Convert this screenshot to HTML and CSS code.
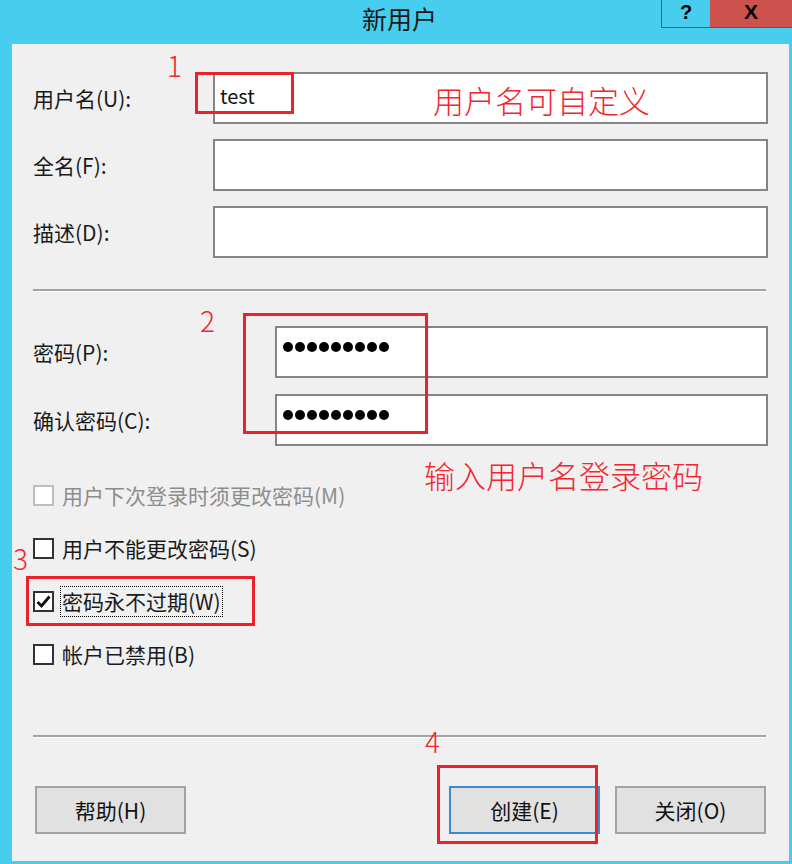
FILE: index.html
```html
<!DOCTYPE html>
<html lang="zh-CN">
<head>
  <meta charset="UTF-8" />
  <meta name="viewport" content="width=device-width, initial-scale=1.0"/>
  <title>新用户</title>
  <link rel="stylesheet" href="styles.css">
</head>
<body>

  <div class="window">
    <div class="titlebar">
      <div class="title">新用户</div>
      <div class="controls">
        <div class="ctrl ctrl-help">?</div>
        <div class="ctrl ctrl-close">X</div>
      </div>
    </div>

    <div class="client">
      <div class="rows">
        <div class="row">
          <label>用户名(U):</label>
          <div class="field"><span class="value">test</span></div>
        </div>
        <div class="row">
          <label>全名(F):</label>
          <div class="field"></div>
        </div>
        <div class="row">
          <label>描述(D):</label>
          <div class="field"></div>
        </div>
      </div>

      <div class="sep sep-top"></div>

      <div class="rows rows-pass">
        <div class="row">
          <label>密码(P):</label>
          <div class="field">
            <div class="dots"><i></i><i></i><i></i><i></i><i></i><i></i><i></i><i></i><i></i></div>
          </div>
        </div>
        <div class="row">
          <label>确认密码(C):</label>
          <div class="field">
            <div class="dots"><i></i><i></i><i></i><i></i><i></i><i></i><i></i><i></i><i></i></div>
          </div>
        </div>
      </div>

      <div class="checks">
        <div class="check disabled"><span class="box"></span><span class="text">用户下次登录时须更改密码(M)</span></div>
        <div class="check"><span class="box"></span><span class="text">用户不能更改密码(S)</span></div>
        <div class="check"><span class="box">
          <svg viewBox="0 0 17 17" width="17" height="17"><path d="M2.5 9 L6.5 13 L14.5 3.5" fill="none" stroke="#111" stroke-width="2.8"/></svg>
        </span><span class="text focus">密码永不过期(W)</span></div>
        <div class="check"><span class="box"></span><span class="text">帐户已禁用(B)</span></div>
      </div>

      <div class="sep sep-bottom"></div>

      <div class="footer">
        <button class="btn">帮助(H)</button>
        <div class="btn-group">
          <button class="btn btn-default">创建(E)</button>
          <button class="btn">关闭(O)</button>
        </div>
      </div>

      <!-- annotations -->
      <div class="note num n1">1</div>
      <div class="mark m1"></div>
      <div class="note big b1">用户名可自定义</div>
      <div class="note num n2">2</div>
      <div class="mark m2"></div>
      <div class="note big b2">输入用户名登录密码</div>
      <div class="note num n3">3</div>
      <div class="mark m3"></div>
      <div class="note num n4">4</div>
      <div class="mark m4"></div>
    </div>
  </div>

</body>
</html>
```

FILE: styles.css
```css
* {
  box-sizing: border-box;
}
body {
  margin: 0;
  font-family: "Noto Sans CJK SC", sans-serif;
  background: #47cdee;
  overflow: hidden;
}
.window {
  width: 792px;
  height: 864px;
  display: flex;
  flex-direction: column;
  background: #47cdee;
}
.titlebar {
  height: 44px;
  flex-shrink: 0;
  position: relative;
  display: flex;
  justify-content: center;
}
.title {
  font-size: 25px;
  line-height: 36px;
  color: #1a1a1a;
  padding-left: 7px;
}
.controls {
  position: absolute;
  top: 0;
  right: 0;
  display: flex;
}
.ctrl {
  height: 28px;
  border-bottom: 1px solid #3d5f6c;
  font-family: "Liberation Sans", sans-serif;
  font-weight: bold;
  font-size: 20px;
  line-height: 24px;
  text-align: center;
  color: #000;
}
.ctrl-help {
  width: 49px;
  border-left: 1px solid #3d5f6c;
}
.ctrl-close {
  width: 82px;
  background: #cd524d;
  font-size: 21px;
}
.client {
  flex: 1;
  margin: 0 3px 3px 12px;
  background: #f0f0f0;
  position: relative;
  padding: 28px 21px 0 21px;
  font-size: 21px;
  color: #1a1a1a;
}
.rows {
  display: flex;
  flex-direction: column;
  gap: 15px;
}
.rows-pass {
  gap: 16px;
  margin-top: 34px;
}
.row {
  display: grid;
  grid-template-columns: 180px 1fr;
  align-items: center;
}
.rows-pass .row {
  grid-template-columns: 242px 1fr;
}
.field {
  height: 52px;
  background: #fff;
  border: 2px solid #858585;
  padding: 6px 5px 0;
}
.rows-pass .field {
  padding: 0;
}
.value {
  font-size: 20px;
  line-height: 28px;
  color: #111;
}
.dots {
  display: flex;
  gap: 2px;
  margin: 14px 0 0 6px;
}
.dots i {
  width: 10px;
  height: 10px;
  border-radius: 50%;
  background: #000;
}
.sep {
  height: 3px;
  background: #a3a3a3;
  border-bottom: 1px solid #fff;
  margin-right: 2px;
}
.sep-top {
  margin-top: 31px;
}
.checks {
  margin-top: 33px;
  display: flex;
  flex-direction: column;
  gap: 21px;
}
.check {
  height: 32px;
  display: flex;
  align-items: center;
  gap: 8px;
}
.box {
  width: 21px;
  height: 21px;
  border: 2px solid #333;
  background: #fff;
  display: flex;
}
.check.disabled .box {
  border-color: #bdbdbd;
}
.check.disabled .text {
  color: #8d8d8d;
}
.text.focus {
  border: 1px dotted #000;
  padding: 0 1px;
  margin-left: -2px;
  line-height: 29px;
}
.sep-bottom {
  margin-top: 65px;
}
.footer {
  margin: 48px 2px 0;
  display: flex;
  justify-content: space-between;
}
.btn-group {
  display: flex;
  gap: 15px;
}
.btn {
  width: 151px;
  height: 48px;
  background: #e1e1e1;
  border: 2px solid #a3a3a3;
  font-family: "Noto Sans CJK SC", sans-serif;
  font-size: 21px;
  color: #111;
  padding: 0;
}
.btn-default {
  border-color: #3a8bd0;
}
.note {
  position: absolute;
  color: #f2262f;
  line-height: 1;
  font-weight: 300;
  white-space: nowrap;
}
.num {
  font-size: 28px;
}
.big {
  font-size: 31px;
}
.mark {
  position: absolute;
  border: 3px solid #ea222b;
}
.n1 { left: 155px; top: 7px; }
.m1 { left: 183px; top: 28px; width: 99px; height: 42px; }
.b1 { left: 421px; top: 40px; }
.n2 { left: 188px; top: 262px; }
.m2 { left: 231px; top: 269px; width: 185px; height: 121px; }
.b2 { left: 412px; top: 415px; }
.n3 { left: 1px; top: 500px; }
.m3 { left: 14px; top: 532px; width: 229px; height: 50px; }
.n4 { left: 413px; top: 683px; }
.m4 { left: 425px; top: 721px; width: 161px; height: 79px; }
```
